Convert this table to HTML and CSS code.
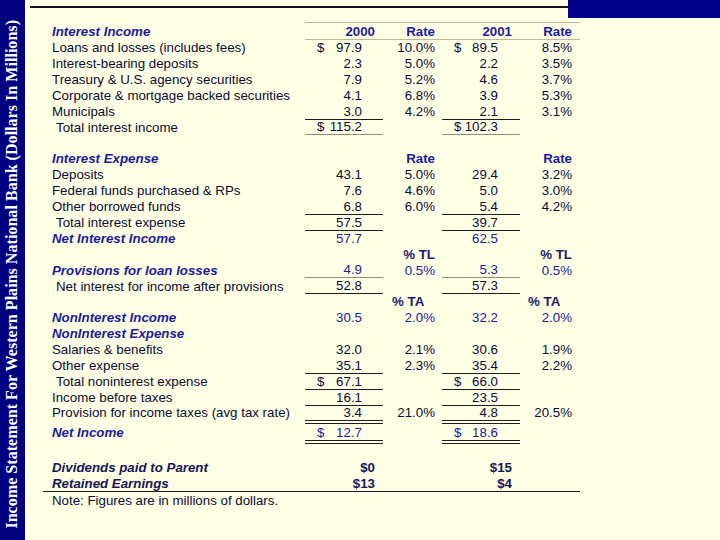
FILE: index.html
```html
<!DOCTYPE html>
<html>
<head>
<meta charset="utf-8">
<link rel="stylesheet" href="styles.css">
</head>
<body>
<div class="page">
  <aside class="side"><span class="side-title">Income Statement For Western Plains National Bank (Dollars In Millions)</span></aside>
  <main class="main">
    <div class="topbar"><div class="rule"></div><div class="block"></div></div>
    <div class="sheet">
      <div class="row head">
        <div class="lbl hd">Interest Income</div>
        <div class="ca wide bt hb">2000</div>
        <div class="cb bt hb">Rate</div>
        <div class="cc wide bt hb">2001</div>
        <div class="cd bt hb">Rate</div>
      </div>
      <div class="row"><div class="lbl">Loans and losses (includes fees)</div><div class="ca"><span class="cur">$</span>97.9</div><div class="cb">10.0%</div><div class="cc"><span class="cur">$</span>89.5</div><div class="cd">8.5%</div></div>
      <div class="row"><div class="lbl">Interest-bearing deposits</div><div class="ca">2.3</div><div class="cb">5.0%</div><div class="cc">2.2</div><div class="cd">3.5%</div></div>
      <div class="row"><div class="lbl">Treasury &amp; U.S. agency securities</div><div class="ca">7.9</div><div class="cb">5.2%</div><div class="cc">4.6</div><div class="cd">3.7%</div></div>
      <div class="row"><div class="lbl">Corporate &amp; mortgage backed securities</div><div class="ca">4.1</div><div class="cb">6.8%</div><div class="cc">3.9</div><div class="cd">5.3%</div></div>
      <div class="row"><div class="lbl">Municipals</div><div class="ca ul">3.0</div><div class="cb">4.2%</div><div class="cc ul">2.1</div><div class="cd">3.1%</div></div>
      <div class="row"><div class="lbl ind">Total interest income</div><div class="ca ull"><span class="cur">$</span>115.2</div><div class="cb"></div><div class="cc ull"><span class="cur">$</span>102.3</div><div class="cd"></div></div>
      <div class="row"></div>
      <div class="row"><div class="lbl hd">Interest Expense</div><div class="ca"></div><div class="cb hb">Rate</div><div class="cc"></div><div class="cd hb">Rate</div></div>
      <div class="row"><div class="lbl">Deposits</div><div class="ca">43.1</div><div class="cb">5.0%</div><div class="cc">29.4</div><div class="cd">3.2%</div></div>
      <div class="row"><div class="lbl">Federal funds purchased &amp; RPs</div><div class="ca">7.6</div><div class="cb">4.6%</div><div class="cc">5.0</div><div class="cd">3.0%</div></div>
      <div class="row"><div class="lbl">Other borrowed funds</div><div class="ca ul">6.8</div><div class="cb">6.0%</div><div class="cc ul">5.4</div><div class="cd">4.2%</div></div>
      <div class="row"><div class="lbl ind">Total interest expense</div><div class="ca ul">57.5</div><div class="cb"></div><div class="cc ul">39.7</div><div class="cd"></div></div>
      <div class="row blue"><div class="lbl hd">Net Interest Income</div><div class="ca">57.7</div><div class="cb"></div><div class="cc">62.5</div><div class="cd"></div></div>
      <div class="row"><div class="lbl"></div><div class="ca"></div><div class="cb hb dk">% TL</div><div class="cc"></div><div class="cd hb dk">% TL</div></div>
      <div class="row blue"><div class="lbl hd">Provisions for loan losses</div><div class="ca ull">4.9</div><div class="cb">0.5%</div><div class="cc ull">5.3</div><div class="cd">0.5%</div></div>
      <div class="row"><div class="lbl ind">Net interest for income after provisions</div><div class="ca ul">52.8</div><div class="cb"></div><div class="cc ul">57.3</div><div class="cd"></div></div>
      <div class="row"><div class="lbl"></div><div class="ca"></div><div class="cb hb dk left">% TA</div><div class="cc"></div><div class="cd hb dk left">% TA</div></div>
      <div class="row blue"><div class="lbl hd">NonInterest Income</div><div class="ca">30.5</div><div class="cb">2.0%</div><div class="cc">32.2</div><div class="cd">2.0%</div></div>
      <div class="row"><div class="lbl hd">NonInterest Expense</div><div class="ca"></div><div class="cb"></div><div class="cc"></div><div class="cd"></div></div>
      <div class="row"><div class="lbl">Salaries &amp; benefits</div><div class="ca">32.0</div><div class="cb">2.1%</div><div class="cc">30.6</div><div class="cd">1.9%</div></div>
      <div class="row"><div class="lbl">Other expense</div><div class="ca ul">35.1</div><div class="cb">2.3%</div><div class="cc ul">35.4</div><div class="cd">2.2%</div></div>
      <div class="row"><div class="lbl ind">Total noninterest expense</div><div class="ca ul"><span class="cur">$</span>67.1</div><div class="cb"></div><div class="cc ul"><span class="cur">$</span>66.0</div><div class="cd"></div></div>
      <div class="row"><div class="lbl">Income before taxes</div><div class="ca ul">16.1</div><div class="cb"></div><div class="cc ul">23.5</div><div class="cd"></div></div>
      <div class="row"><div class="lbl">Provision for income taxes (avg tax rate)</div><div class="ca">3.4</div><div class="cb">21.0%</div><div class="cc">4.8</div><div class="cd">20.5%</div></div>
      <div class="row net blue"><div class="lbl hd">Net Income</div><div class="ca dbl"><span class="cur">$</span>12.7</div><div class="cb"></div><div class="cc dbl"><span class="cur">$</span>18.6</div><div class="cd"></div></div>
      <div class="row gap"></div>
      <div class="row"><div class="lbl hd dark">Dividends paid to Parent</div><div class="ca wide bold">$0</div><div class="cb"></div><div class="cc wide bold">$15</div><div class="cd"></div></div>
      <div class="row"><div class="lbl hd dark">Retained Earnings</div><div class="ca wide bold">$13</div><div class="cb"></div><div class="cc wide bold">$4</div><div class="cd"></div></div>
      <div class="endrule"></div>
      <div class="row"><div class="lbl">Note: Figures are in millions of dollars.</div></div>
    </div>
  </main>
</div>
</body>
</html>
```
FILE: styles.css
```css
html, body {
  margin: 0;
  padding: 0;
}
body {
  width: 720px;
  height: 540px;
  overflow: hidden;
  background: #ffffe6;
  font-family: "Liberation Sans", Arial, sans-serif;
  font-size: 13.3px;
  color: #0a0a36;
}
.page {
  display: flex;
  width: 720px;
  height: 540px;
}
.side {
  width: 25px;
  flex: none;
  background: #000080;
  display: flex;
  flex-direction: column;
  justify-content: flex-end;
  align-items: center;
  padding-bottom: 11px;
  box-sizing: border-box;
}
.side-title {
  writing-mode: vertical-rl;
  transform: rotate(180deg);
  font-family: "Liberation Serif", "Times New Roman", serif;
  font-weight: bold;
  font-size: 16.1px;
  color: #ffffff;
  white-space: nowrap;
  line-height: 1;
}
.main {
  flex: 1;
  display: flex;
  flex-direction: column;
}
.topbar {
  display: flex;
  height: 18px;
  padding-left: 5px;
}
.rule {
  flex: 1;
  height: 2px;
  margin-top: 6px;
  background: #1c1024;
}
.block {
  width: 152px;
  height: 18px;
  background: #000088;
}
.sheet {
  margin-top: 4px;
  margin-left: 27px;
  width: 528px;
}
.row {
  display: grid;
  grid-template-columns: 253px 78px 59px 78px 60px;
  height: 15.9px;
  line-height: 15px;
}
.row.head {
  height: 17px;
}
.row.net {
  height: 24px;
}
.row.gap {
  height: 14.4px;
}
.row > div {
  box-sizing: border-box;
  white-space: nowrap;
  display: flex;
  align-items: center;
  padding-top: 1px;
}
.lbl.ind {
  padding-left: 4px;
}
.hd {
  font-weight: bold;
  font-style: italic;
  color: #1b1ba0;
}
.hd.dark {
  color: #15155a;
}
.ca, .cb, .cc, .cd {
  justify-content: flex-end;
}
.ca { padding-left: 12px; padding-right: 21px; }
.cb { padding-left: 9px; padding-right: 7px; }
.cc { padding-left: 12px; padding-right: 22px; }
.cd { padding-left: 8px; padding-right: 8px; }
.ca.wide, .cc.wide { padding-right: 8px; }
.cb.left, .cd.left { justify-content: flex-start; }
.cur { margin-right: auto; }
.hb {
  font-weight: bold;
  color: #1b1ba0;
}
.hb.dk {
  color: #1a1a6e;
}
.bold {
  font-weight: bold;
  color: #15155a;
}
.blue .ca, .blue .cb, .blue .cc, .blue .cd {
  color: #2020a0;
}
.bt {
  border-top: 1px solid #bdb89a;
  border-bottom: 1px solid #bdb89a;
}
.ul {
  border-bottom: 1px solid #1e1e22;
}
.ull {
  border-bottom: 1px solid #8e8c78;
}
.dbl {
  border-top: 4px double #1e1e22;
  border-bottom: 4px double #1e1e22;
}
.endrule {
  height: 1px;
  margin-left: -9px;
  background: #1e1e22;
}
```
